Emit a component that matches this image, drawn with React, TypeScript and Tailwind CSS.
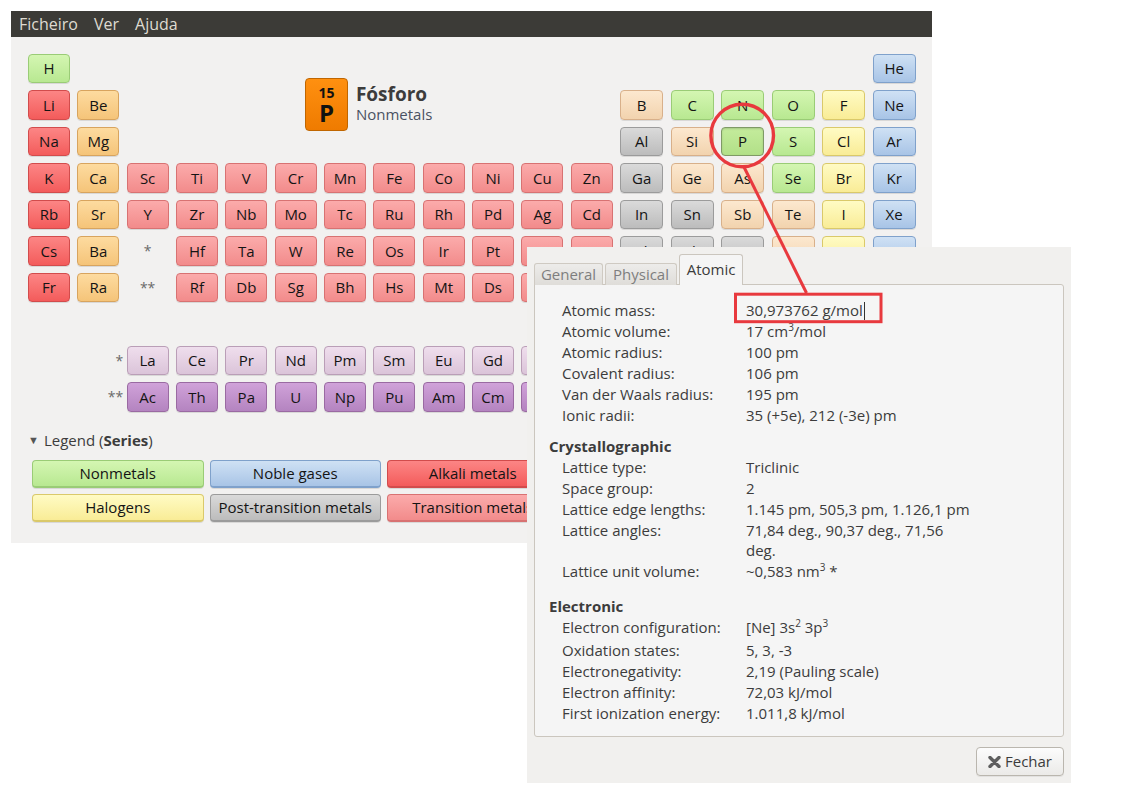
import React from "react";

const CAT: Record<string, string> = {
  alkali: "border-[#d24c4c] from-[#fc8585] to-[#f35b5b]",
  alkaline: "border-[#d8a45e] from-[#fddb9f] to-[#f5c479]",
  transition: "border-[#d87272] from-[#fbabab] to-[#f28b8b]",
  post: "border-[#9b9b9b] from-[#dadada] to-[#bcbcbc]",
  metalloid: "border-[#d8b08a] from-[#fce8cf] to-[#f2d3ae]",
  nonmetal: "border-[#9acc76] from-[#d4f6b2] to-[#b8e891]",
  halogen: "border-[#dac96a] from-[#fffbc4] to-[#f9ec96]",
  noble: "border-[#7fa1cb] from-[#cfe1f4] to-[#a8c4e6]",
  lanth: "border-[#ba9eb7] from-[#efdeed] to-[#dbc4d9]",
  act: "border-[#9a6aa2] from-[#d0a2d9] to-[#b484c0]",
  selected: "border-[#7f9a66] from-[#c4ec9c] to-[#b2e088]",
};

const groups: Record<string, string[]> = {
  nonmetal: ["H", "C", "N", "O", "P", "S", "Se"],
  noble: ["He", "Ne", "Ar", "Kr", "Xe", "Rn", "Uuo"],
  alkali: ["Li", "Na", "K", "Rb", "Cs", "Fr"],
  alkaline: ["Be", "Mg", "Ca", "Sr", "Ba", "Ra"],
  metalloid: ["B", "Si", "Ge", "As", "Sb", "Te", "Po"],
  halogen: ["F", "Cl", "Br", "I", "At", "Uus"],
  post: ["Al", "Ga", "In", "Sn", "Tl", "Pb", "Bi", "Uut", "Fl", "Uup", "Lv"],
  lanth: ["La", "Ce", "Pr", "Nd", "Pm", "Sm", "Eu", "Gd", "Tb", "Dy", "Ho", "Er", "Tm", "Yb", "Lu"],
  act: ["Ac", "Th", "Pa", "U", "Np", "Pu", "Am", "Cm", "Bk", "Cf", "Es", "Fm", "Md", "No", "Lr"],
};

function catOf(s: string): string {
  for (const k of Object.keys(groups)) if (groups[k].includes(s)) return k;
  return "transition";
}

const ROWS: string[] = [
  "H . . . . . . . . . . . . . . . . He",
  "Li Be . . . . . . . . . . B C N O F Ne",
  "Na Mg . . . . . . . . . . Al Si P S Cl Ar",
  "K Ca Sc Ti V Cr Mn Fe Co Ni Cu Zn Ga Ge As Se Br Kr",
  "Rb Sr Y Zr Nb Mo Tc Ru Rh Pd Ag Cd In Sn Sb Te I Xe",
  "Cs Ba * Hf Ta W Re Os Ir Pt Au Hg Tl Pb Bi Po At Rn",
  "Fr Ra ** Rf Db Sg Bh Hs Mt Ds Rg Cn Uut Fl Uup Lv Uus Uuo",
  ". . . . . . . . . . . . . . . . . .",
  ". *L La Ce Pr Nd Pm Sm Eu Gd Tb Dy Ho Er Tm Yb Lu .",
  ". **L Ac Th Pa U Np Pu Am Cm Bk Cf Es Fm Md No Lr .",
];

const btnBase =
  "flex items-center justify-center rounded-[4px] border bg-linear-to-b text-[15px] text-[#141414] shadow-[0_1px_0_rgba(0,0,0,0.10)]";

function Cell({ s, r, c }: { s: string; r: number; c: number }) {
  const pos = { gridColumn: c + 1, gridRow: r + 1 };
  if (s === ".") return null;
  if (s === "*" || s === "**")
    return (
      <div style={pos} className="flex items-center justify-center text-[14px] text-[#6a6a6a]">
        {s}
      </div>
    );
  if (s === "*L" || s === "**L")
    return (
      <div style={pos} className="flex items-center justify-end -mr-[4px] text-[14px] text-[#6a6a6a]">
        {s.replace("L", "")}
      </div>
    );
  const cat = s === "P" ? "selected" : catOf(s);
  return (
    <div style={pos} className={`${btnBase} ${CAT[cat]} ${s === "P" ? "shadow-[inset_0_1px_2px_rgba(0,0,0,0.15)]" : ""}`}>
      {s}
    </div>
  );
}

const LEGEND: [string, string][] = [
  ["Nonmetals", "nonmetal"],
  ["Noble gases", "noble"],
  ["Alkali metals", "alkali"],
  ["Alkaline earth metals", "alkaline"],
  ["Metalloids", "metalloid"],
  ["Halogens", "halogen"],
  ["Post-transition metals", "post"],
  ["Transition metals", "transition"],
  ["Lanthanides", "lanth"],
  ["Actinides", "act"],
];

type Row = { l: string; v: React.ReactNode; cls?: string };

const Sup = ({ children }: { children: React.ReactNode }) => (
  <span className="relative -top-[6px] text-[10px] leading-none">{children}</span>
);

const atomic: Row[] = [
  { l: "Atomic mass:", v: <span>30,973762 g/mol<span className="inline-block w-px h-[18px] bg-[#333] align-middle ml-[1px] -mt-[2px]" /></span> },
  { l: "Atomic volume:", v: <span>17 cm<Sup>3</Sup>/mol</span> },
  { l: "Atomic radius:", v: "100 pm" },
  { l: "Covalent radius:", v: "106 pm" },
  { l: "Van der Waals radius:", v: "195 pm" },
  { l: "Ionic radii:", v: "35 (+5e), 212 (-3e) pm" },
];
const crystal: Row[] = [
  { l: "Lattice type:", v: "Triclinic" },
  { l: "Space group:", v: "2" },
  { l: "Lattice edge lengths:", v: "1.145 pm, 505,3 pm, 1.126,1 pm" },
  { l: "Lattice angles:", v: <span>71,84 deg., 90,37 deg., 71,56<br />deg.</span> },
  { l: "Lattice unit volume:", v: <span>~0,583 nm<Sup>3</Sup> *</span> },
];
const electronic: Row[] = [
  { l: "Electron configuration:", v: <span>[Ne] 3s<Sup>2</Sup> 3p<Sup>3</Sup></span>, cls: "pb-[2px]" },
  { l: "Oxidation states:", v: "5, 3, -3" },
  { l: "Electronegativity:", v: "2,19 (Pauling scale)" },
  { l: "Electron affinity:", v: "72,03 kJ/mol" },
  { l: "First ionization energy:", v: "1.011,8 kJ/mol" },
];

function Rows({ rows }: { rows: Row[] }) {
  return (
    <div className="grid grid-cols-[184px_1fr] gap-y-[1px] pl-[13px] leading-[20px]">
      {rows.map((r) => (
        <React.Fragment key={r.l}>
          <div className={r.cls}>{r.l}</div>
          <div className={r.cls}>{r.v}</div>
        </React.Fragment>
      ))}
    </div>
  );
}

export default function App() {
  return (
    <div className="relative w-[1123px] h-[794px] bg-white overflow-hidden font-['Open_Sans','Noto_Sans',sans-serif] text-[#3c3c3c]">
      {/* Main window */}
      <div className="absolute left-[11px] top-[11px] w-[921px] h-[532px] bg-[#f2f1f0] flex flex-col">
        <div className="h-[26px] bg-[#3c3b37] flex items-center text-[16px] text-[#dfdbd2]">
          <span className="px-[8px]">Ficheiro</span>
          <span className="px-[8px]">Ver</span>
          <span className="px-[8px]">Ajuda</span>
        </div>
        <div className="pl-[17px] pt-[16.5px]">
          <div className="grid grid-cols-[repeat(12,41.85px)_repeat(6,43px)] grid-rows-[repeat(10,29.5px)] gap-x-[7.5px] gap-y-[7px]">
            {ROWS.map((row, r) =>
              row.split(" ").map((s, c) => <Cell key={`${r}-${c}`} s={s} r={r} c={c} />)
            )}
            <div className="col-start-3 col-end-13 row-start-1 row-end-4 flex items-center justify-center gap-[8px] pr-[2px]">
              <div className="w-[43px] h-[53px] rounded-[4px] border border-[#c06600] bg-linear-to-b from-[#ff9010] to-[#ef7b00] flex flex-col items-center justify-center leading-none text-[#111]">
                <span className="text-[14px] font-bold mt-[2px]">15</span>
                <span className="text-[24px] font-bold mt-[1px]">P</span>
              </div>
              <div className="flex flex-col leading-[20px] mt-[-2px]">
                <span className="text-[19px] font-bold text-[#3c3c3c]">Fósforo</span>
                <span className="text-[15px] text-[#4a5263]">Nonmetals</span>
              </div>
            </div>
          </div>
          <div className="mt-[19px] flex items-center h-[20px] text-[15px] text-[#3c3c3c]">
            <span className="text-[11px] mr-[5px] text-[#555]">▼</span>
            <span>
              Legend (<b>Series</b>)
            </span>
          </div>
          <div className="ml-[4px] mt-[9px] grid grid-cols-[repeat(5,171.5px)] gap-x-[6px] gap-y-[6px]">
            {LEGEND.map(([name, cat]) => (
              <div key={name} className={`${btnBase} ${CAT[cat]} h-[28px] border-b-2`}>
                {name}
              </div>
            ))}
          </div>
        </div>
      </div>

      {/* Dialog window */}
      <div className="absolute left-[527px] top-[247px] w-[544px] h-[536px] bg-[#f1f0ee] px-[7px] pt-[7px] flex flex-col text-[15px]">
        <div className="flex items-end gap-[2px] relative z-10 -mb-px">
          <div className="h-[22.5px] w-[69px] flex items-center justify-center rounded-t-[3px] border border-b-0 border-[#cfcac2] bg-linear-to-b from-[#edecea] to-[#dfddd9] text-[#7e7e7e]">
            General
          </div>
          <div className="h-[22.5px] w-[72px] flex items-center justify-center rounded-t-[3px] border border-b-0 border-[#cfcac2] bg-linear-to-b from-[#edecea] to-[#dfddd9] text-[#7e7e7e]">
            Physical
          </div>
          <div className="h-[31px] w-[64px] flex items-center justify-center pb-[1px] rounded-t-[3px] border border-b-0 border-[#cbc6be] bg-[#f5f5f5] text-[#3c3c3c]">
            Atomic
          </div>
        </div>
        <div className="h-[453px] rounded-[3px] rounded-tl-none border border-[#cbc6be] bg-[#f5f5f5] pl-[14px] pt-[15px]">
          <Rows rows={atomic} />
          <div className="mt-[11px] font-bold leading-[21px]">Crystallographic</div>
          <Rows rows={crystal} />
          <div className="mt-[15px] font-bold leading-[21px]">Electronic</div>
          <Rows rows={electronic} />
        </div>
        <div className="flex justify-end mt-[10px]">
          <div className="w-[88px] h-[29px] rounded-[4px] border border-[#bab6ae] bg-linear-to-b from-[#fcfcfc] to-[#ebeae8] shadow-[0_1px_0_rgba(0,0,0,0.06)] flex items-center justify-center gap-[4px] text-[#3c3c3c]">
            <svg width="13" height="12" viewBox="0 0 13 12">
              <path d="M2 1.5 L11 10.5 M11 1.5 L2 10.5" stroke="#5e5e5e" strokeWidth="3.4" strokeLinecap="round" />
            </svg>
            <span>Fechar</span>
          </div>
        </div>
      </div>

      {/* Annotation */}
      <svg className="absolute left-0 top-0 pointer-events-none" width="1123" height="794" viewBox="0 0 1123 794">
        <circle cx="742.2" cy="135.5" r="31.3" fill="none" stroke="#e8393e" strokeWidth="3.4" />
        <line x1="744" y1="167" x2="806.5" y2="293" stroke="#e8393e" strokeWidth="3" />
        <rect x="735.5" y="294.2" width="145.5" height="27.5" fill="none" stroke="#e8393e" strokeWidth="3" />
      </svg>
    </div>
  );
}
